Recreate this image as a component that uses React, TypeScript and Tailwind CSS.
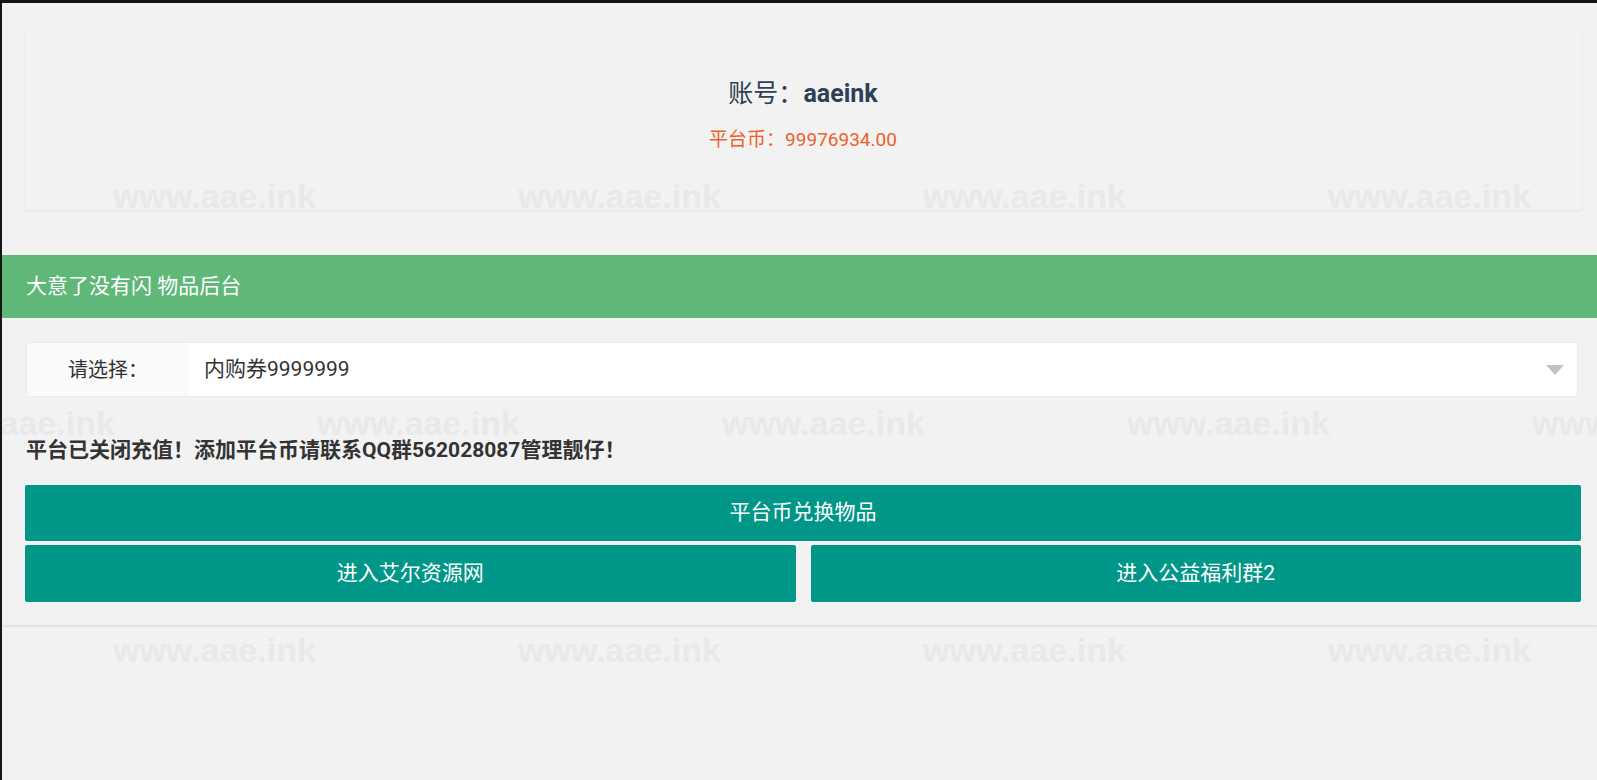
import React from 'react';

const marks = [
  { top: 176, lefts: [111, 516, 921, 1326] },
  { top: 403, lefts: [-90, 315, 720, 1125, 1530] },
  { top: 630, lefts: [111, 516, 921, 1326] },
];

function Watermark() {
  return (
    <div className="pointer-events-none absolute inset-0 z-10 select-none">
      {marks.map((row) =>
        row.lefts.map((left) => (
          <span
            key={`${row.top}-${left}`}
            className="absolute whitespace-nowrap font-['Liberation_Sans',Arial,sans-serif] text-[34px] leading-none font-bold text-[#e8e9eb]"
            style={{ top: row.top, left }}
          >
            www.aae.ink
          </span>
        )),
      )}
    </div>
  );
}

function AccountCard() {
  return (
    <div className="mt-[25px] ml-[23px] mr-[16px] flex h-[182px] flex-col items-center rounded-[2px] bg-[#f2f2f2] pt-[48px] shadow-[0_1px_3px_0_rgba(0,0,0,0.06)]">
      <div className="text-[25px] leading-[36px] text-[#2f4056]">
        账号：<b className="font-bold">aaeink</b>
      </div>
      <div className="mt-[14px] text-[19px] leading-[27px] text-[#f0602c]">
        平台币：99976934.00
      </div>
    </div>
  );
}

function ItemSelect() {
  return (
    <div className="ml-[1px] mr-[3px] flex h-[55px] rounded-[2px] border border-[#ececec] bg-white">
      <div className="flex w-[162px] items-center justify-center bg-[#fafafa] text-[20px] text-[#333]">
        请选择：
      </div>
      <div className="flex flex-1 items-center justify-between pl-[15px] pr-[13px] text-[21px] text-[#333]">
        <span>内购券9999999</span>
        <svg width="18" height="10" viewBox="0 0 18 10">
          <polygon points="0,0 18,0 9,10" fill="#c2c2c2" />
        </svg>
      </div>
    </div>
  );
}

function Panel() {
  return (
    <div className="mt-[45px] shadow-[0_2px_2px_0_rgba(0,0,0,0.08)]">
      <div className="flex h-[63px] items-center bg-[#5fb878] pl-[24px] text-[21px] text-white">
        大意了没有闪 物品后台
      </div>
      <div className="pl-[23px] pr-[16px] pt-[24px] pb-[23px]">
        <ItemSelect />
        <div className="mt-[38px] pl-[1px] text-[21px] leading-[30px] font-bold text-[#333]">
          平台已关闭充值！添加平台币请联系QQ群562028087管理靓仔！
        </div>
        <button className="mt-[20px] flex h-[56px] w-full items-center justify-center rounded-[2px] bg-[#009688] text-[21px] text-white">
          平台币兑换物品
        </button>
        <div className="mt-[4px] grid grid-cols-2 gap-[15px]">
          <button className="flex h-[57px] items-center justify-center rounded-[2px] bg-[#009688] text-[21px] text-white">
            进入艾尔资源网
          </button>
          <button className="flex h-[57px] items-center justify-center rounded-[2px] bg-[#009688] text-[21px] text-white">
            进入公益福利群2
          </button>
        </div>
      </div>
    </div>
  );
}

export default function App() {
  return (
    <div className="relative h-[780px] w-full overflow-hidden border-t-[3px] border-l-2 border-[#151515] bg-[#f2f2f2] font-['Roboto','Noto_Sans_CJK_SC',sans-serif]">
      <AccountCard />
      <Panel />
      <Watermark />
    </div>
  );
}
